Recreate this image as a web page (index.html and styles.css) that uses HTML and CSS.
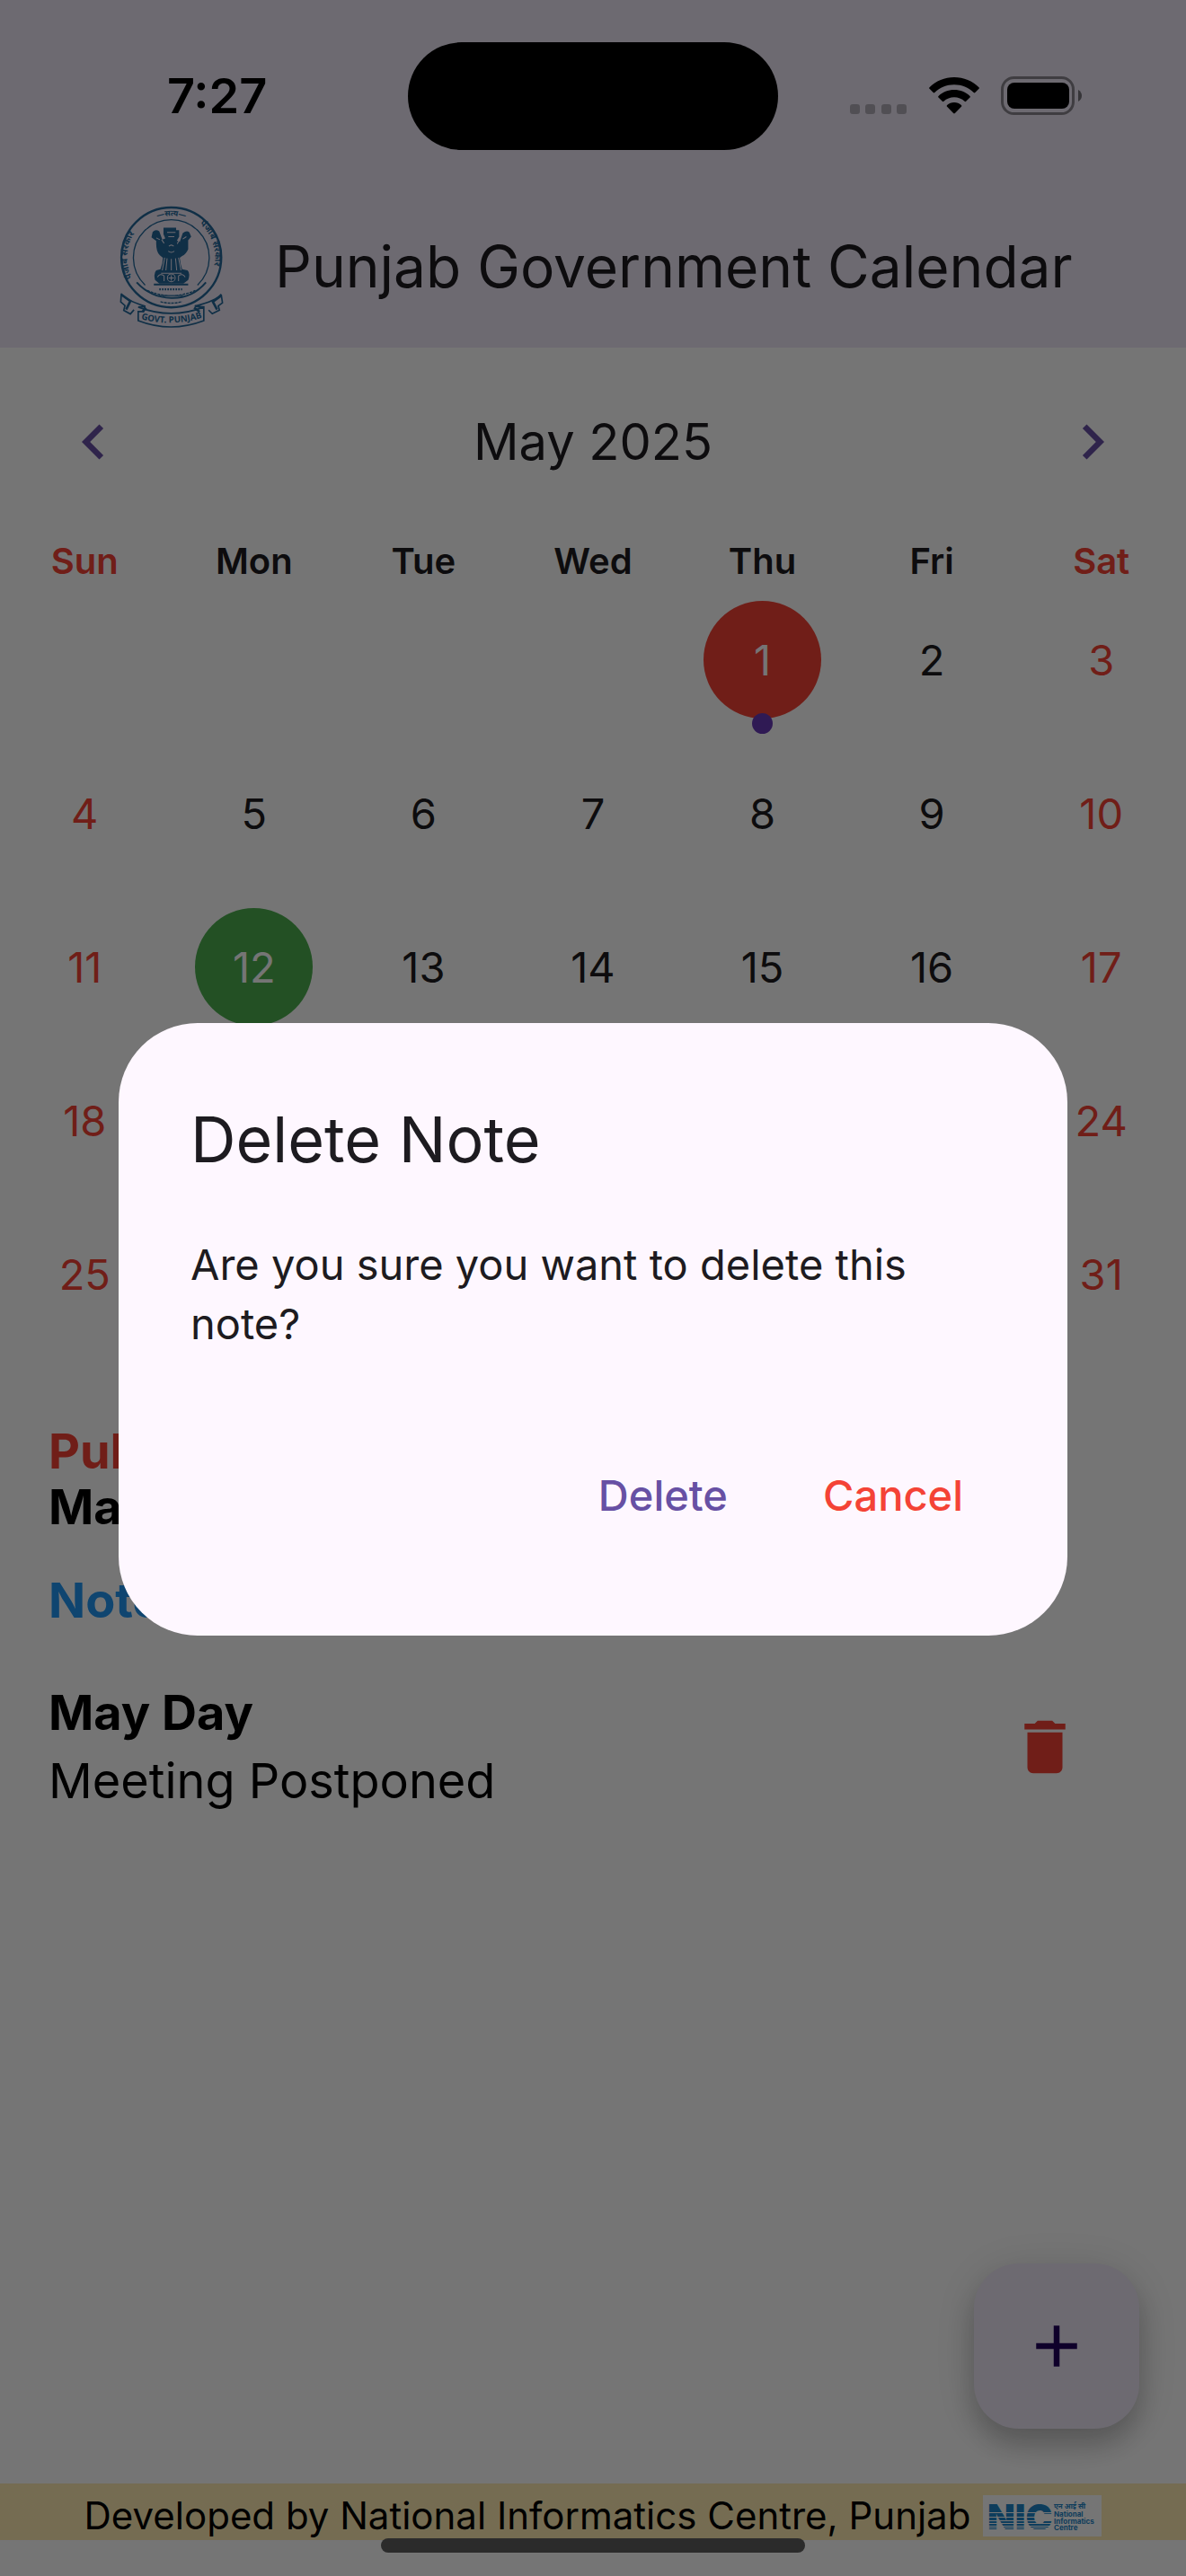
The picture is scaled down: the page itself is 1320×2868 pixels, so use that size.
FILE: index.html
```html
<!DOCTYPE html>
<html lang="en">
<head>
<meta charset="utf-8">
<meta name="viewport" content="width=device-width, initial-scale=1">
<title>Punjab Government Calendar</title>
<link rel="stylesheet" href="styles.css">
</head>
<body>
<div class="app">
  <header class="app-bar">
    <div class="status-bar">
      <time class="status-time">7:27</time>
      <span class="island"></span>
      <div class="status-icons">
        <svg class="icon-cell" viewBox="0 0 64 44" aria-hidden="true"><g fill="#000" fill-opacity=".25"><rect x="0" y="31" width="11" height="11" rx="3"/><rect x="17" y="31" width="11" height="11" rx="3"/><rect x="35" y="31" width="11" height="11" rx="3"/><rect x="52" y="31" width="11" height="11" rx="3"/></g></svg>
        <svg class="icon-wifi" viewBox="0 0 56 44" aria-hidden="true"><path d="M28 1C17.500 1 7.500 5.200.500 12.200q-.8.8 0 1.600l4.200 4.200q.8.8 1.600 0C12 12.500 19.600 9.300 28 9.300s16 3.200 21.700 8.700q.8.8 1.600 0l4.200-4.200q.8-.8 0-1.600C48.500 5.200 38.500 1 28 1zM28 15c-6.700 0-12.900 2.600-17.500 6.900q-.8.8 0 1.600l4.300 4.300q.8.8 1.600 0c3.100-2.800 7.200-4.500 11.600-4.500s8.500 1.700 11.600 4.500q.8.8 1.600 0l4.300-4.300q.8-.8 0-1.600C40.900 17.600 34.700 15 28 15zM28 29c-3 0-5.800 1.200-7.900 3.100q-.8.8 0 1.600l7 7.400q.9.900 1.800 0l7-7.400q.8-.8 0-1.600C33.800 30.200 31 29 28 29z"/></svg>
        <svg class="icon-battery" viewBox="0 0 92 44" aria-hidden="true"><rect x="1.500" y="1.500" width="79" height="40" rx="13" fill="none" stroke="#000" stroke-opacity=".42" stroke-width="3"/><rect x="7" y="7" width="69" height="29" rx="8"/><path d="M86 15q4 2.500 4 6.500t-4 6.500z" fill-opacity=".5"/></svg>
      </div>
    </div>
    <div class="title-row">
      <svg class="emblem" viewBox="98 50 350 412" role="img" aria-label="Government of Punjab emblem">
        <defs>
          <path id="arc-left" d="M142 292A146 146 0 0 1 170 120"/>
          <path id="arc-right" d="M366 113A146 146 0 0 1 400 292"/>
          <path id="arc-top" d="M222 96A142 142 0 0 1 322 96"/>
          <path id="arc-ribbon" d="M172 430Q270 456 374 426"/>
        </defs>
        <g class="emblem-line">
          <circle cx="272" cy="225" r="166" stroke-width="7"/>
          <path d="M185 317A126 126 0 1 1 359 317" stroke-width="4"/>
          <path d="M157 308q46 50 115 52t115-52" stroke-width="6"/>
          <path d="M192 335q80 34 160 0M230 352h84M236 372q36 10 72 0" stroke-width="4" stroke-dasharray="9 3"/>
          <path d="M106 345q8 20 78 42l-4 18h-18v30q108 42 218 0v-46h-18l-12-2q72-18 88-40M106 345l-2 28 14 12-4 16 22 12 12-14M438 350l4 26-14 10 4 14-24 12-12-12M162 390q110 42 218 0M184 388l-22 2M350 386l30 4" stroke-width="5"/>
          <path d="M108 350l28 20-14 28M438 352l-28 20 14 26M348 392l18 14M188 392l-12 14" stroke-width="8"/>
        </g>
        <g class="emblem-fill">
          <path d="M252 126h36v8h10v22l-8 14q8-2 10 4l10-30q14-10 22-2l6 14-10 12v30q-8 18-20 22l-8 6q2 20 8 38l18 4q10 10 2 32l-16 12H232l-14-12q-6-22 4-32l14-4q8-20 8-38l-10-8q-14-12-12-48l-16-12 4-18q10-10 22-2l10 28 10-4-6-14v-22h6z"/>
          <rect x="214" y="312" width="114" height="6"/>
        </g>
        <g class="emblem-gap">
          <path d="M258 142h28M262 156h20M240 166l8 12M300 162l-8 18M222 160l12 6M322 156l-12 8M250 226l-8 42M258 228l-4 40M272 230v38M286 228l4 40M296 226l8 42M264 188q8-8 16 0M262 204q10 8 20 0M226 290q8-14 22-4v18M318 290q-8-14-22-4v18M238 278h68"/>
          <circle cx="272" cy="293" r="13"/>
          <path d="M272 284v18M263 293h18"/>
        </g>
        <path class="emblem-line" d="M232 331h76" stroke-width="6" stroke-dasharray="5 4"/>
        <g class="emblem-text">
          <text font-size="29"><textPath href="#arc-left">पंजाब सरकार</textPath></text>
          <text font-size="29"><textPath href="#arc-right">पंजाब सरकार</textPath></text>
          <text font-size="26"><textPath href="#arc-top" startOffset="50%" text-anchor="middle">—सत्य—</textPath></text>
          <text font-size="29"><textPath href="#arc-ribbon" startOffset="50%" text-anchor="middle">GOVT. PUNJAB</textPath></text>
        </g>
      </svg>
      <h1 class="app-title">Punjab Government Calendar</h1>
    </div>
  </header>

  <main class="content">
    <div class="month-bar">
      <button class="icon-button" type="button" aria-label="Previous month"><svg class="icon" viewBox="0 0 24 24"><path d="M15.410 7.410L14 6l-6 6 6 6 1.410-1.410L10.830 12z"/></svg></button>
      <h2 class="month">May 2025</h2>
      <button class="icon-button" type="button" aria-label="Next month"><svg class="icon" viewBox="0 0 24 24"><path d="M8.590 16.590L10 18l6-6-6-6-1.410 1.410L13.170 12z"/></svg></button>
    </div>
    <table class="calendar">
      <thead>
        <tr><th>Sun</th><th>Mon</th><th>Tue</th><th>Wed</th><th>Thu</th><th>Fri</th><th>Sat</th></tr>
      </thead>
      <tbody>
        <tr><td></td><td></td><td></td><td></td><td><span class="day holiday">1</span></td><td>2</td><td>3</td></tr>
        <tr><td>4</td><td>5</td><td>6</td><td>7</td><td>8</td><td>9</td><td>10</td></tr>
        <tr><td>11</td><td><span class="day today">12</span></td><td>13</td><td>14</td><td>15</td><td>16</td><td>17</td></tr>
        <tr><td>18</td><td></td><td></td><td></td><td></td><td></td><td>24</td></tr>
        <tr><td>25</td><td></td><td></td><td></td><td></td><td></td><td>31</td></tr>
      </tbody>
    </table>
    <section class="details">
      <h3 class="heading heading-holidays">Public Holidays:</h3>
      <p class="holiday-name">May Day</p>
      <h3 class="heading heading-notes">Notes:</h3>
      <div class="note">
        <div class="note-text">
          <h4 class="note-title">May Day</h4>
          <p class="note-body">Meeting Postponed</p>
        </div>
        <button class="icon-button delete-note" type="button" aria-label="Delete note"><svg class="icon" viewBox="0 0 24 24"><path d="M6 19c0 1.100.9 2 2 2h8c1.100 0 2-.9 2-2V7H6v12zM19 4h-3.500l-1-1h-5l-1 1H5v2h14V4z"/></svg></button>
      </div>
    </section>
  </main>

  <button class="fab" type="button" aria-label="Add note"><svg class="icon" viewBox="0 0 24 24"><path d="M19 13h-6v6h-2v-6H5v-2h6V5h2v6h6v2z"/></svg></button>

  <footer class="credit">
    <span>Developed by National Informatics Centre, Punjab</span>
    <svg class="nic" viewBox="0 0 132 46" role="img" aria-label="National Informatics Centre">
      <defs>
        <pattern id="bars" width="140" height="46" patternUnits="userSpaceOnUse">
          <path fill="#1f86c8" d="M0 0h140v19H0zM0 20h140v4H0zM0 25h140v3H0zM0 29h140v2H0zM0 32h140v2H0zM0 35h140v1H0zM0 37h140v1H0zM0 39h140v1H0z"/>
        </pattern>
      </defs>
      <rect width="132" height="46" fill="#fff"/>
      <text class="nic-mark" x="5" y="39" fill="url(#bars)">NIC</text>
      <g class="nic-name">
        <text x="79" y="15">एन आई सी</text>
        <text x="79" y="24">National</text>
        <text x="79" y="32">Informatics</text>
        <text x="79" y="39">Centre</text>
      </g>
    </svg>
  </footer>
</div>

<div class="scrim">
  <div class="dialog" role="alertdialog" aria-modal="true" aria-labelledby="dialog-title" aria-describedby="dialog-text">
    <h2 class="dialog-title" id="dialog-title">Delete Note</h2>
    <p class="dialog-text" id="dialog-text">Are you sure you want to delete this note?</p>
    <div class="dialog-actions">
      <button class="text-button" type="button">Delete</button>
      <button class="text-button text-button-cancel" type="button">Cancel</button>
    </div>
  </div>
</div>
<div class="home-indicator"></div>
</body>
</html>
```
FILE: styles.css
```css
:root {
  --surface: #ede7f6;
  --primary: #6750a4;
  --red: #f44336;
  --ink: #1d1b20;
}

* { box-sizing: border-box; }

body {
  margin: 0;
  background: #fff;
  color: var(--ink);
  font-family: Inter, "Noto Sans", "Liberation Sans", sans-serif;
}

h1, h2, h3, h4, p { margin: 0; }

button {
  border: 0;
  padding: 0;
  background: none;
  color: inherit;
  font: inherit;
  cursor: pointer;
}

svg { display: block; }

.app {
  display: flex;
  flex-direction: column;
  min-height: 100vh;
  padding-bottom: 40px;
}

/* Header */
.app-bar { background: var(--surface); }

.status-bar {
  display: grid;
  grid-template-columns: 1fr 412px 1fr;
  align-items: center;
  padding-top: 46px;
}

.status-time {
  padding-left: 186px;
  color: #000;
  font-size: 54px;
  font-weight: 600;
  line-height: 122px;
}

.island {
  height: 120px;
  border-radius: 60px;
  background: #000;
}

.status-icons {
  display: flex;
  justify-content: flex-end;
  gap: 24px;
  padding-right: 114px;
}

.icon-cell { width: 64px; height: 44px; }
.icon-wifi { width: 56px; height: 44px; }
.icon-battery { width: 92px; height: 44px; }

.title-row {
  display: flex;
  align-items: center;
  gap: 56px;
  height: 219px;
  padding: 38px 132px 0;
}

.emblem { flex: none; width: 118px; height: 138px; }
.emblem-line { fill: none; stroke: #24689a; }
.emblem-fill { fill: #24689a; }
.emblem-gap { fill: none; stroke: var(--surface); stroke-width: 3; }
.emblem-text { fill: #24689a; font-weight: 700; font-family: "Noto Sans", sans-serif; }

.app-title {
  font-size: 64px;
  font-weight: 400;
  white-space: nowrap;
}

/* Calendar */
.month-bar {
  display: flex;
  align-items: center;
  justify-content: space-between;
  height: 210px;
  padding: 0 65px;
}

.month { font-size: 56px; font-weight: 400; }

.icon { width: 78px; height: 78px; fill: currentColor; }
.month-bar .icon-button { color: var(--primary); }

.calendar {
  width: 100%;
  table-layout: fixed;
  border-collapse: collapse;
  text-align: center;
}

.calendar th {
  height: 52px;
  padding: 4px 0 0;
  font-size: 40px;
  font-weight: 600;
  line-height: 48px;
}

.calendar td {
  height: 171px;
  padding: 0;
  font-size: 47px;
}

.calendar th:first-child, .calendar th:last-child,
.calendar td:first-child, .calendar td:last-child { color: var(--red); }

.day {
  position: relative;
  display: block;
  width: 131px;
  margin: 0 auto;
  border-radius: 50%;
  color: #fff;
  line-height: 131px;
}

.today { background: #4caf50; }
.holiday { background: var(--red); }

.holiday::after {
  content: "";
  position: absolute;
  left: 54px;
  bottom: -17px;
  width: 23px;
  height: 23px;
  border-radius: 50%;
  background: #673ab7;
}

/* Holidays and notes */
.details {
  padding: 81px 54px 0;
  color: #000;
  font-size: 54px;
  line-height: 62px;
}

.heading { font-size: 54px; font-weight: 700; }
.heading-holidays { color: var(--red); }
.heading-notes { margin-top: 42px; color: #2196f3; }
.holiday-name { font-weight: 700; }

.note {
  display: flex;
  align-items: center;
  justify-content: space-between;
  margin-top: 56px;
  padding-right: 64px;
  line-height: 76px;
}

.note-title { font-size: 54px; font-weight: 700; }
.delete-note { color: var(--red); }

.fab {
  position: fixed;
  right: 52px;
  bottom: 164px;
  display: grid;
  place-items: center;
  width: 184px;
  height: 184px;
  border-radius: 50px;
  background: var(--surface);
  color: #21005d;
  box-shadow: 0 18px 30px rgba(0, 0, 0, .2), 0 6px 54px rgba(0, 0, 0, .12);
}

.credit {
  display: flex;
  align-items: center;
  justify-content: center;
  gap: 14px;
  height: 63px;
  margin-top: auto;
  padding-top: 8px;
  background: #ffecb3;
  color: #000;
  font-size: 42px;
  white-space: nowrap;
}

.nic { width: 132px; height: 46px; }
.nic-mark { font-size: 40px; font-weight: 900; }
.nic-name { fill: #1f86c8; font-size: 8px; font-weight: 700; }

/* Dialog */
.scrim {
  position: fixed;
  inset: 0;
  display: grid;
  place-items: center;
  padding: 186px 10% 94px;
  background: rgba(0, 0, 0, .54);
}

.dialog {
  width: 100%;
  padding: 81px 80px 84px;
  border-radius: 88px;
  background: #fef7ff;
}

.dialog-title {
  font-size: 70px;
  font-weight: 400;
  line-height: 98px;
}

.dialog-text {
  margin-top: 57px;
  font-size: 47px;
  line-height: 66px;
}

.dialog-actions {
  display: flex;
  justify-content: flex-end;
  gap: 34px;
  margin-top: 86px;
}

.text-button {
  padding: 0 36px;
  color: var(--primary);
  font-size: 47px;
  font-weight: 500;
  line-height: 144px;
}

.text-button-cancel { color: var(--red); }

.home-indicator {
  position: fixed;
  bottom: 26px;
  left: 50%;
  width: 472px;
  height: 16px;
  margin-left: -236px;
  border-radius: 8px;
  background: #2b2b2b;
}
```
